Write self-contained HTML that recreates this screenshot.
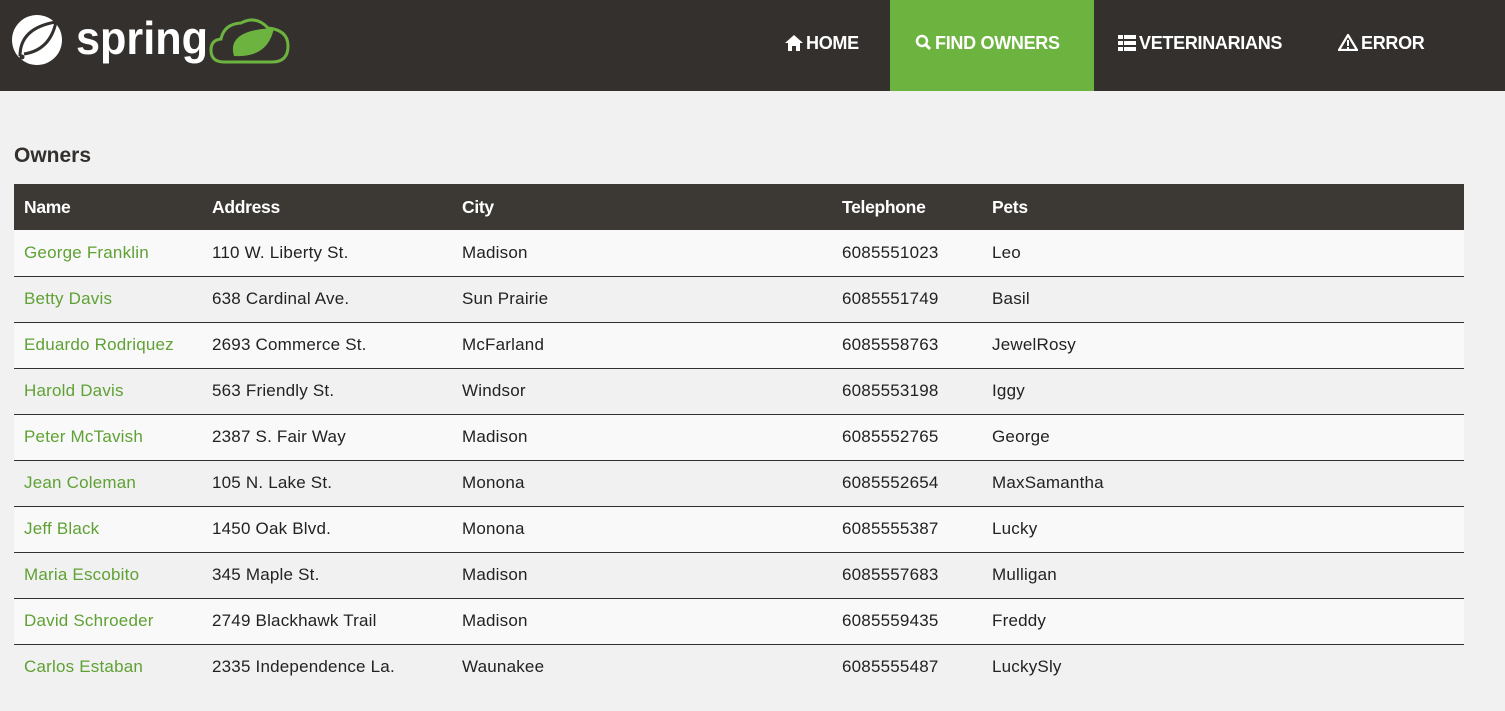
<!DOCTYPE html>
<html><head><style>
*{margin:0;padding:0;box-sizing:border-box}
body{width:1505px;height:711px;background:#f1f1f1;font-family:"Liberation Sans",sans-serif;overflow:hidden;position:relative}
.nav{position:absolute;left:0;top:0;width:1505px;height:91px;background:#34302d}
.nav a{position:absolute;top:0;height:91px;line-height:86px;color:#fff;font-weight:bold;font-size:18px;text-decoration:none;letter-spacing:-0.3px}
.nav a.act{background:#6db33f}
.nav svg{vertical-align:-2px;margin-right:3px}
h2{position:absolute;left:14px;top:144px;font-size:21px;color:#34302d;font-weight:bold}
table{position:absolute;left:14px;top:184px;width:1450px;border-collapse:collapse;font-size:17px}
th{background:#3c3834;color:#fff;text-align:left;height:46px;padding:0 10px;font-weight:bold;font-size:17.5px;letter-spacing:-0.3px}
td{height:46px;padding:0 10px;color:#222;border-bottom:1px solid #34302d;letter-spacing:0.2px}
tr:last-child td{border-bottom:none}
tr:nth-child(even) td{background:#f9f9f9}
tr:nth-child(odd) td{background:#f1f1f1}
td:first-child{color:#5fa134}
</style></head><body>
<div class="nav">
<svg style="position:absolute;left:6px;top:10px" width="290" height="60" viewBox="0 0 290 60">
<circle cx="31" cy="30" r="25" fill="#fff"/>
<path d="M14 46 Q14 18 50 12 Q44 40 18 44" fill="none" stroke="#34302d" stroke-width="3"/>
<circle cx="16" cy="47" r="2.5" fill="#34302d"/>
<text x="70" y="44" font-family="Liberation Sans" font-size="46" font-weight="bold" fill="#fff" textLength="132" lengthAdjust="spacingAndGlyphs">spring</text>
<path d="M218 52 Q205 52 205 40 Q205 30 215 29 Q218 14 235 13 Q250 5 262 18 Q282 20 282 36 Q282 52 266 52 Z" fill="none" stroke="#6db33f" stroke-width="3"/>
<path d="M228 46 Q220 20 268 18 Q262 48 228 46Z" fill="#6db33f"/>
</svg>
<a style="left:785px;width:90px"><svg width="18" height="16" viewBox="0 0 18 16"><path d="M9 0 L18 8 H15 V16 H11 V11 H7 V16 H3 V8 H0Z" fill="#fff"/></svg>HOME</a>
<a class="act" style="left:890px;width:204px;padding-left:25px"><svg width="17" height="17" viewBox="0 0 17 17"><circle cx="7" cy="7" r="5" fill="none" stroke="#fff" stroke-width="2.5"/><path d="M10.5 10.5 L15 15" stroke="#fff" stroke-width="3"/></svg>FIND OWNERS</a>
<a style="left:1118px"><svg width="18" height="16" viewBox="0 0 18 16"><path d="M0 0h5v4H0zM6 0h12v4H6zM0 6h5v4H0zM6 6h12v4H6zM0 12h5v4H0zM6 12h12v4H6z" fill="#fff"/></svg>VETERINARIANS</a>
<a style="left:1338px"><svg width="20" height="17" viewBox="0 0 20 17"><path d="M10 1 L19 16 H1Z" fill="none" stroke="#fff" stroke-width="2.2"/><rect x="9" y="6" width="2" height="6" fill="#fff"/><rect x="9" y="13" width="2" height="2" fill="#fff"/></svg>ERROR</a>
</div>
<h2>Owners</h2>
<table>
<colgroup><col style="width:188px"><col style="width:250px"><col style="width:380px"><col style="width:150px"><col></colgroup>
<tr><th>Name</th><th>Address</th><th>City</th><th>Telephone</th><th>Pets</th></tr>
<tr><td>George Franklin</td><td>110 W. Liberty St.</td><td>Madison</td><td>6085551023</td><td>Leo</td></tr>
<tr><td>Betty Davis</td><td>638 Cardinal Ave.</td><td>Sun Prairie</td><td>6085551749</td><td>Basil</td></tr>
<tr><td>Eduardo Rodriquez</td><td>2693 Commerce St.</td><td>McFarland</td><td>6085558763</td><td>JewelRosy</td></tr>
<tr><td>Harold Davis</td><td>563 Friendly St.</td><td>Windsor</td><td>6085553198</td><td>Iggy</td></tr>
<tr><td>Peter McTavish</td><td>2387 S. Fair Way</td><td>Madison</td><td>6085552765</td><td>George</td></tr>
<tr><td>Jean Coleman</td><td>105 N. Lake St.</td><td>Monona</td><td>6085552654</td><td>MaxSamantha</td></tr>
<tr><td>Jeff Black</td><td>1450 Oak Blvd.</td><td>Monona</td><td>6085555387</td><td>Lucky</td></tr>
<tr><td>Maria Escobito</td><td>345 Maple St.</td><td>Madison</td><td>6085557683</td><td>Mulligan</td></tr>
<tr><td>David Schroeder</td><td>2749 Blackhawk Trail</td><td>Madison</td><td>6085559435</td><td>Freddy</td></tr>
<tr><td>Carlos Estaban</td><td>2335 Independence La.</td><td>Waunakee</td><td>6085555487</td><td>LuckySly</td></tr>
</table>
</body></html>
